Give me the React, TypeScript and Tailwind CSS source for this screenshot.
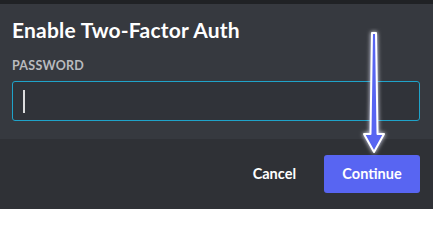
export default function App() {
  return (
    <div className="relative flex h-[209px] w-[433px] flex-col overflow-hidden bg-[#36393f] font-['Lato',sans-serif]">
      <div className="h-[4px] bg-[#202225]" />
      <div className="px-3 pt-[14px]">
        <h1 className="text-[21px] font-bold leading-[24px] tracking-[0.01em] text-white">Enable Two-Factor Auth</h1>
        <p className="mt-[17px] text-[12.5px] font-bold leading-[14px] tracking-[0.02em] text-[#b9bbbe]">PASSWORD</p>
        <div className="mt-[8px] flex h-[40px] w-[408px] items-center rounded-[3px] border border-[#1fa3c9] bg-[#303339] px-[10px]">
          <span className="h-[23px] w-[2px] bg-[#dcddde]" />
        </div>
      </div>
      <div className="mt-auto flex h-[70px] items-center justify-end gap-[28px] bg-[#2f3136] px-[13px]">
        <span className="text-[14.5px] font-bold text-white">Cancel</span>
        <button className="h-[38px] w-[96px] rounded-[3px] bg-[#5865f2] text-[14.5px] font-bold text-white">
          Continue
        </button>
      </div>
      <svg
        className="absolute left-[358px] top-[28px]"
        width="32"
        height="130"
        viewBox="0 0 32 130"
      >
        <defs>
          <filter id="glow" x="-50%" y="-20%" width="200%" height="140%">
            <feGaussianBlur stdDeviation="2" result="b" />
            <feMerge>
              <feMergeNode in="b" />
              <feMergeNode in="SourceGraphic" />
            </feMerge>
          </filter>
        </defs>
        <path
          d="M14 5 L18 5 L19.5 106 L26 106 L16 124 L6 106 L12.5 106 Z"
          fill="#5865f2"
          stroke="white"
          strokeWidth="2"
          strokeLinejoin="round"
          filter="url(#glow)"
        />
      </svg>
    </div>
  );
}
